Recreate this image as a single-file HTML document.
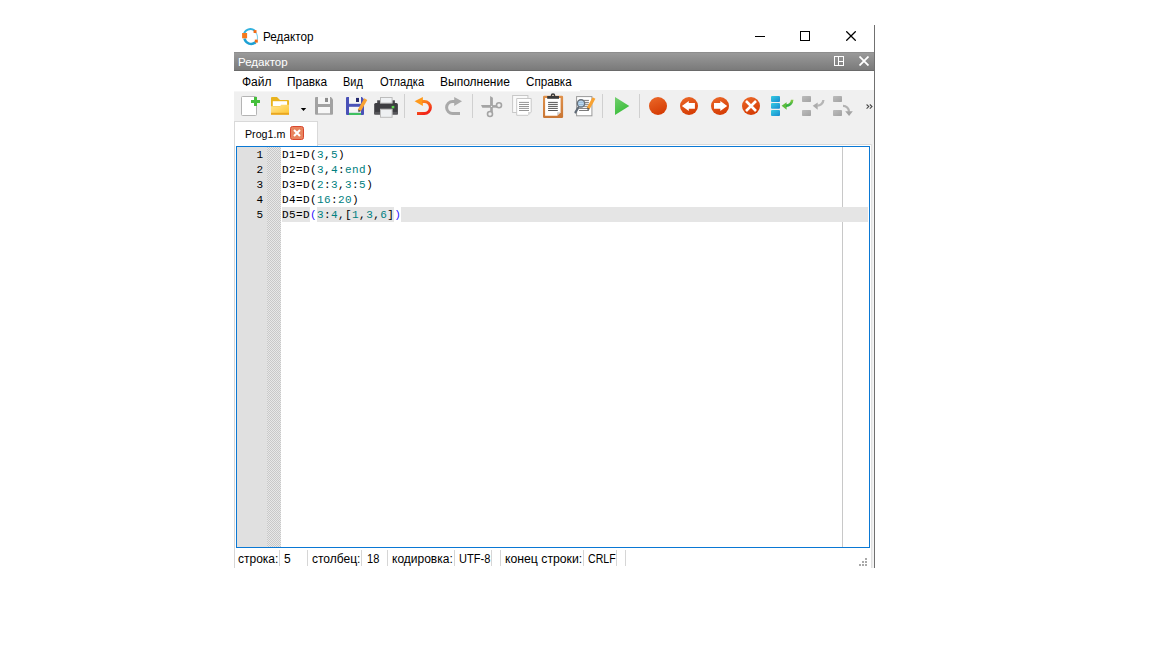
<!DOCTYPE html>
<html><head><meta charset="utf-8">
<style>
html,body{margin:0;padding:0;}
body{width:1152px;height:648px;background:#fff;position:relative;overflow:hidden;font-family:"Liberation Sans",sans-serif;font-size:12px;color:#000;}
.a{position:absolute;}
.t{position:absolute;white-space:nowrap;line-height:14px;}
.code{position:absolute;font-family:"Liberation Mono",monospace;font-size:11px;line-height:15px;white-space:pre;letter-spacing:0.4px;color:#000;}
.n{color:#008080;}
.br{color:#2a10ff;}
.sep{position:absolute;width:1px;background:#d6d6d6;}
.tsep{position:absolute;width:1px;top:94px;height:24px;background:#cfcfcf;}
.ic{position:absolute;}
</style></head><body>

<!-- window right border -->
<div class="a" style="left:874px;top:25px;width:1px;height:543px;background:#707070"></div>

<!-- title bar -->
<svg class="ic" style="left:238px;top:24px" width="24" height="24" viewBox="0 0 24 24">
  <path d="M5.6 11.5 A6.9 7.6 0 0 1 16.6 6.6" fill="none" stroke="#33b2de" stroke-width="2.1"/>
  <path d="M6.4 14.5 A6.9 7.4 0 0 0 17.5 18.2" fill="none" stroke="#1ea1d4" stroke-width="2.5"/>
  <path d="M17.6 8.4 A6.9 7.6 0 0 1 19.2 15.8" fill="none" stroke="#86d0ea" stroke-width="1.1"/>
  <rect x="4.1" y="9" width="5" height="5.3" fill="#f57a1e"/>
  <rect x="15.6" y="6.1" width="2.9" height="2.9" fill="#f26a12"/>
  <rect x="16.8" y="15.6" width="3" height="3" fill="#f26a12"/>
</svg>
<div id="t1" class="t" style="left:263px;top:30px;transform:scaleX(0.976);transform-origin:0 0">Редактор</div>
<div class="a" style="left:755px;top:36px;width:10px;height:1px;background:#000"></div>
<div class="a" style="left:800px;top:31px;width:8px;height:8px;border:1px solid #000"></div>
<svg class="ic" style="left:846px;top:31px" width="10" height="10" viewBox="0 0 10 10"><path d="M0.3 0.3L9.7 9.7M9.7 0.3L0.3 9.7" stroke="#000" stroke-width="1.25"/></svg>

<!-- panel header -->
<div class="a" style="left:234px;top:52px;width:640px;height:17px;background:linear-gradient(#9a9a9a,#7a7a7a);border-top:1px solid #8e8e8e;border-bottom:1px solid #6a6a6a"></div>
<div id="t2" class="t" style="left:238px;top:55px;font-size:11px;color:#fff;transform:scaleX(1.05);transform-origin:0 0">Редактор</div>
<svg class="ic" style="left:834px;top:56px" width="10" height="10" viewBox="0 0 10 10">
  <rect x="0.5" y="0.5" width="9" height="9" fill="none" stroke="#fff" stroke-width="1"/>
  <path d="M4.5 0.5V9.5M4.5 5.5H9.5" stroke="#fff" stroke-width="1"/>
</svg>
<svg class="ic" style="left:859px;top:56px" width="10" height="10" viewBox="0 0 10 10"><path d="M0.5 0.5L9.5 9.5M9.5 0.5L0.5 9.5" stroke="#fff" stroke-width="1.8"/></svg>

<!-- menu bar -->
<div class="a" style="left:234px;top:71px;width:640px;height:20px;background:#fff"></div>
<div id="t3" class="t" style="left:242px;top:75px;">Файл</div>
<div id="t4" class="t" style="left:287px;top:75px;transform:scaleX(0.99);transform-origin:0 0">Правка</div>
<div id="t5" class="t" style="left:343px;top:75px;transform:scaleX(0.91);transform-origin:0 0">Вид</div>
<div id="t6" class="t" style="left:380px;top:75px;transform:scaleX(0.93);transform-origin:0 0">Отладка</div>
<div id="t7" class="t" style="left:440px;top:75px;">Выполнение</div>
<div id="t8" class="t" style="left:526px;top:75px;transform:scaleX(0.97);transform-origin:0 0">Справка</div>

<!-- toolbar + tabstrip bg -->
<div class="a" style="left:234px;top:91px;width:640px;height:53px;background:#f0f0f0"></div>
<div class="a" style="left:580px;top:90px;width:294px;height:1px;background:#f0f0f0"></div>
<div class="a" style="left:234px;top:91px;width:346px;height:1px;background:#f6f6f6"></div>
<div class="a" style="left:234px;top:121px;width:1px;height:447px;background:#d6d6d6"></div>

<!-- TOOLBAR ICONS -->
<svg class="ic" style="left:0;top:0" width="1152" height="648" viewBox="0 0 1152 648">
<defs>
 <linearGradient id="gFold" x1="0" y1="0" x2="1" y2="1"><stop offset="0" stop-color="#ffe593"/><stop offset="1" stop-color="#ffc630"/></linearGradient>
 <linearGradient id="gUndo" x1="0" y1="0" x2="0.6" y2="1"><stop offset="0" stop-color="#ff9c1c"/><stop offset="1" stop-color="#f2261a"/></linearGradient>
 <linearGradient id="gRed" x1="0" y1="0" x2="0.4" y2="1"><stop offset="0" stop-color="#ec6a2a"/><stop offset="1" stop-color="#d63e06"/></linearGradient>
 <linearGradient id="gPlay" x1="0" y1="0" x2="0.5" y2="1"><stop offset="0" stop-color="#74cf70"/><stop offset="1" stop-color="#38bd38"/></linearGradient>
 <linearGradient id="gBlue" x1="0" y1="0" x2="1" y2="1"><stop offset="0" stop-color="#36cce2"/><stop offset="1" stop-color="#168ad0"/></linearGradient>
 <linearGradient id="gGray" x1="0" y1="0" x2="1" y2="1"><stop offset="0" stop-color="#bcbcbc"/><stop offset="1" stop-color="#a2a2a2"/></linearGradient>
 <linearGradient id="gGreen" x1="0" y1="0" x2="0" y2="1"><stop offset="0" stop-color="#8ccc44"/><stop offset="1" stop-color="#2eae42"/></linearGradient>
 <linearGradient id="gBoard" x1="0" y1="0" x2="0" y2="1"><stop offset="0" stop-color="#e0924c"/><stop offset="1" stop-color="#c97634"/></linearGradient>
</defs>
<!-- new -->
<rect x="241.5" y="96.5" width="15" height="19" rx="1" fill="#fff" stroke="#b4b4b4"/>
<rect x="251" y="100" width="9" height="3" fill="#45bf3c"/>
<rect x="254" y="97" width="3" height="9" fill="#45bf3c"/>
<!-- open folder -->
<path d="M271 98 Q271 97 272 97 H277 L280 100 H288 Q289 100 289 101 V110 H271 Z" fill="#e9b31e"/>
<rect x="272.8" y="101.2" width="14.3" height="4.8" fill="#fff"/>
<path d="M271 106.2 H280 L281.2 104.8 H289 V114.7 H271 Z" fill="url(#gFold)"/>
<rect x="271" y="112.8" width="18" height="1.9" fill="#e8a622"/>
<!-- dropdown -->
<path d="M300.8 108 H306.2 L303.5 111 Z" fill="#000"/>
<!-- save gray -->
<path d="M315 98 Q315 97 316 97 H331 L333 99.5 V113.7 Q333 114.7 332 114.7 H316 Q315 114.7 315 113.7 Z" fill="#a2a2a2"/>
<rect x="318" y="97" width="12" height="7" fill="#f5f5f5"/>
<rect x="325" y="97.9" width="3" height="4.1" fill="#8c8c8c"/>
<rect x="318" y="107" width="12" height="6" fill="#f7f7f7"/>
<rect x="318" y="113" width="12" height="1.7" fill="#c2c2c2"/>
<!-- save blue -->
<path d="M346 98 Q346 97 347 97 H362 L364 99.5 V114 Q364 115 363 115 H347 Q346 115 346 114 Z" fill="#4a52b8"/>
<rect x="349" y="97" width="12" height="6.8" fill="#f5f5f5"/>
<rect x="356" y="97.9" width="3" height="4.1" fill="#252a70"/>
<rect x="349" y="106.8" width="12" height="6.1" fill="#f5f5f5"/>
<rect x="349" y="112.9" width="12" height="2.1" fill="#3ec060"/>
<path d="M365.8 99.2 L359.2 110.6" stroke="#f8a232" stroke-width="3.4"/>
<path d="M358.2 109.5 L360.8 111 L358.5 112.2 Z" fill="#444"/>
<!-- printer -->
<rect x="377.2" y="100.3" width="2.8" height="3.2" fill="#48484c"/>
<rect x="392.1" y="100.3" width="2.8" height="3.2" fill="#48484c"/>
<rect x="374.2" y="103.1" width="23.7" height="11.4" rx="1.5" fill="#3d3d41"/>
<rect x="374.2" y="111.9" width="23.7" height="2.6" fill="#56565a"/>
<rect x="380.5" y="97.5" width="11.6" height="5.6" fill="#f0f2f4" stroke="#bcbcbc"/>
<rect x="380.5" y="109.2" width="11.6" height="8.1" fill="#eef0f2" stroke="#bcbcbc"/>
<rect x="391.7" y="105.9" width="2.6" height="2.4" fill="#5cd650"/>
<!-- separators -->
<rect x="404" y="94" width="1" height="24" fill="#d0d0d0"/>
<rect x="472" y="94" width="1" height="24" fill="#d0d0d0"/>
<rect x="602" y="94" width="1" height="24" fill="#d0d0d0"/>
<rect x="639" y="94" width="1" height="24" fill="#d0d0d0"/>
<!-- undo -->
<path d="M414.6 101.3 L422.9 96.9 V105.9 Z" fill="#ff9a1c"/>
<path d="M422 101.5 H424.4 A6 6 0 0 1 424.4 113.5 H417" fill="none" stroke="url(#gUndo)" stroke-width="3"/>
<!-- redo -->
<path d="M462 101.3 L454.2 96.9 V105.9 Z" fill="#ababab"/>
<path d="M455 101.5 H452.6 A6 6 0 0 0 452.6 113.5 H460" fill="none" stroke="#a9a9a9" stroke-width="3"/>
<!-- scissors -->
<path d="M490.1 96.1 L492.9 97.8 V106.5 H490.1 Z" fill="#a4a4a4"/>
<path d="M481 105 H492.5 V107.8 H482.3 Z" fill="#a4a4a4"/>
<path d="M492 106.4 H497" stroke="#a4a4a4" stroke-width="2.6"/>
<path d="M491.5 107 V112" stroke="#a4a4a4" stroke-width="2.6"/>
<circle cx="499" cy="105.2" r="2.5" fill="none" stroke="#a4a4a4" stroke-width="1.6"/>
<circle cx="490" cy="114" r="2.5" fill="none" stroke="#a4a4a4" stroke-width="1.6"/>
<circle cx="491.5" cy="106.4" r="0.7" fill="#eee"/>
<!-- copy -->
<rect x="512.6" y="95.5" width="15.3" height="17" fill="#fafafa" stroke="#c8c8c8"/>
<path d="M516.7 98.5 H531.2 V112 L528 115.3 H516.7 Z" fill="#fff" stroke="#c8c8c8"/>
<path d="M528 115.3 L531.2 112 H528 Z" fill="#d8d8d8"/>
<path d="M519 102.4 H529 M519 104.5 H529 M519 106.5 H529 M519 108.4 H529 M519 110.5 H529" stroke="#959595" stroke-width="1"/>
<!-- paste -->
<rect x="543" y="95.8" width="20.1" height="22.2" rx="1.2" fill="url(#gBoard)"/>
<path d="M545.1 97.9 H560.6 V112.2 L557.1 115.7 H545.1 Z" fill="#fff"/>
<path d="M557.1 115.7 L560.6 112.2 H557.1 Z" fill="#d0d0d0"/>
<rect x="547.2" y="96" width="11.8" height="2.8" fill="#3a3a3a"/>
<circle cx="553" cy="95.6" r="1.6" fill="none" stroke="#3a3a3a" stroke-width="1.4"/>
<path d="M548.1 102.4 H557.8 M548.1 104.4 H557.8 M548.1 106.4 H557.8 M548.1 108.4 H557.8 M548.1 110.5 H557.8" stroke="#555" stroke-width="1"/>
<!-- find/replace -->
<rect x="576.6" y="96.6" width="15.3" height="19.2" fill="#fff" stroke="#999"/>
<path d="M579.1 100.4 H588.9 M579.1 102.4 H588.9 M579.1 104.3 H588.9 M579.1 106.3 H588.9 M579.1 108.4 H588.9 M579.1 110.5 H588.9" stroke="#7a7a7a" stroke-width="1"/>
<circle cx="581" cy="103.4" r="3.6" fill="#bcdaf2" stroke="#66707a" stroke-width="1.4"/>
<path d="M578.4 102.3 H583.6 M578.4 104.5 H583.6" stroke="#8fb4d4" stroke-width="0.8"/>
<path d="M578.4 107.4 L575.4 112.4" stroke="#5f6a76" stroke-width="2.1" stroke-linecap="round"/>
<path d="M594 97.9 L588.2 108.4" stroke="#f8a232" stroke-width="3.2"/>
<path d="M587.3 107.6 L589.9 109 L587.6 110.2 Z" fill="#555"/>
<!-- play -->
<path d="M615 97 V115 L629.3 106 Z" fill="url(#gPlay)"/>
<!-- record -->
<circle cx="658" cy="106" r="9" fill="url(#gRed)"/>
<!-- back -->
<circle cx="689" cy="106" r="9" fill="url(#gRed)"/>
<path d="M681.9 106 L688.8 100.9 V103 H694.9 V108.8 H688.8 V111 Z" fill="#fff"/>
<!-- forward -->
<circle cx="720" cy="106" r="9" fill="url(#gRed)"/>
<path d="M727.2 106 L720.3 100.9 V103 H714 V108.8 H720.3 V111 Z" fill="#fff"/>
<!-- stop -->
<circle cx="751" cy="106" r="9" fill="url(#gRed)"/>
<path d="M746 101 L756 111 M756 101 L746 111" stroke="#fff" stroke-width="2.6"/>
<!-- step in (blue) -->
<rect x="771" y="96" width="9" height="6" rx="1" fill="url(#gBlue)"/>
<rect x="771" y="103" width="9" height="5.7" rx="1" fill="url(#gBlue)"/>
<rect x="771" y="110" width="9" height="6" rx="1" fill="url(#gBlue)"/>
<path d="M781.6 105.8 L786.6 102.2 V109.7 Z" fill="#5cbc3c"/>
<path d="M786 105.6 A6 6 0 0 0 792.2 99.8" fill="none" stroke="url(#gGreen)" stroke-width="2.6"/>
<!-- step (gray) -->
<rect x="802" y="96" width="9" height="6" rx="0.8" fill="url(#gGray)"/>
<rect x="802" y="110" width="9" height="6" rx="0.8" fill="url(#gGray)"/>
<path d="M812.7 105.8 L817.7 102.4 V109.7 Z" fill="#acacac"/>
<path d="M817 105.6 A6 6 0 0 0 823.4 100" fill="none" stroke="#b6b6b6" stroke-width="2.3"/>
<!-- step out (gray) -->
<rect x="833" y="96" width="9" height="6" rx="0.8" fill="url(#gGray)"/>
<rect x="833" y="110" width="9" height="6" rx="0.8" fill="url(#gGray)"/>
<path d="M843 105.8 A6 6 0 0 1 849 111.8" fill="none" stroke="#b2b2b2" stroke-width="2.3"/>
<path d="M845.2 111.2 H852.8 L849.1 116 Z" fill="#a4a4a4"/>
<!-- overflow -->
<path d="M866.6 104.5 L868.8 106.6 L866.6 108.7 M869.8 104.5 L872 106.6 L869.8 108.7" fill="none" stroke="#454545" stroke-width="1.05"/>
</svg>


<!-- tab -->
<div class="a" style="left:234px;top:121px;width:82px;height:24px;background:#fff;border:1px solid #d9d9d9;border-bottom:none"></div>
<div class="a" style="left:318px;top:144px;width:554px;height:1px;background:#dadada"></div>
<div class="a" style="left:871px;top:144px;width:3px;height:424px;background:linear-gradient(to right,#d9d9d9,#ededed 50%,#f9f9f9)"></div>
<div id="t9" class="t" style="left:245px;top:127px;font-size:11px;transform:scaleX(0.97);transform-origin:0 0">Prog1.m</div>
<svg class="ic" style="left:290px;top:126px" width="14" height="14" viewBox="0 0 14 14">
  <rect x="0.5" y="0.5" width="13" height="13" rx="2" fill="#e8845e" stroke="#d8472f"/>
  <path d="M4 4L10 10M10 4L4 10" stroke="#fff" stroke-width="2"/>
</svg>

<!-- editor -->
<div class="a" style="left:236px;top:146px;width:632px;height:400px;border:1px solid #0a78d4;background:#fff"></div>
<div class="a" style="left:237px;top:147px;width:30px;height:400px;background:#e0e0e0"></div>
<div class="a" style="left:267px;top:147px;width:14px;height:400px;background-color:#e8e8e8;background-image:linear-gradient(45deg,#c8c8c8 25%,transparent 25%,transparent 75%,#c8c8c8 75%),linear-gradient(45deg,#c8c8c8 25%,transparent 25%,transparent 75%,#c8c8c8 75%);background-size:2px 2px;background-position:1px 0,0 1px"></div>
<div class="a" style="left:842px;top:147px;width:1px;height:400px;background:#c8c8c8"></div>
<!-- current line -->
<div class="a" style="left:282px;top:207px;width:586px;height:15px;background:#e5e5e5"></div>
<div class="a" style="left:310px;top:207px;width:7px;height:15px;background:#fff"></div>
<div class="a" style="left:394px;top:207px;width:7px;height:15px;background:#fff"></div>

<div id="c1" class="code" style="left:237px;top:148px;width:26px;text-align:right;letter-spacing:0">1
2
3
4
5</div>
<div id="c2" class="code" style="left:282px;top:148px;">D1=D(<span class="n">3</span>,<span class="n">5</span>)
D2=D(<span class="n">3</span>,<span class="n">4</span>:<span class="n">end</span>)
D3=D(<span class="n">2</span>:<span class="n">3</span>,<span class="n">3</span>:<span class="n">5</span>)
D4=D(<span class="n">16</span>:<span class="n">20</span>)
D5=D<span class="br">(</span><span class="n">3</span>:<span class="n">4</span>,[<span class="n">1</span>,<span class="n">3</span>,<span class="n">6</span>]<span class="br">)</span></div>

<!-- status bar -->
<div id="t10" class="t" style="left:238px;top:552px;">строка:</div>
<div class="sep" style="left:279px;top:550px;height:16px"></div>
<div id="t11" class="t" style="left:284px;top:552px;">5</div>
<div class="sep" style="left:307px;top:550px;height:16px"></div>
<div id="t12" class="t" style="left:312px;top:552px;">столбец:</div>
<div class="sep" style="left:361px;top:550px;height:16px"></div>
<div id="t13" class="t" style="left:367px;top:552px;transform:scaleX(0.92);transform-origin:0 0">18</div>
<div class="sep" style="left:387px;top:550px;height:16px"></div>
<div id="t14" class="t" style="left:392px;top:552px;">кодировка:</div>
<div class="sep" style="left:454px;top:550px;height:16px"></div>
<div id="t15" class="t" style="left:459px;top:552px;transform:scaleX(0.92);transform-origin:0 0">UTF-8</div>
<div class="sep" style="left:491px;top:550px;height:16px"></div>
<div class="sep" style="left:500px;top:550px;height:16px"></div>
<div id="t16" class="t" style="left:505px;top:552px;transform:scaleX(1.02);transform-origin:0 0">конец строки:</div>
<div class="sep" style="left:583px;top:550px;height:16px"></div>
<div id="t17" class="t" style="left:588px;top:552px;transform:scaleX(0.88);transform-origin:0 0">CRLF</div>
<div class="sep" style="left:616px;top:550px;height:16px"></div>
<div class="sep" style="left:625px;top:550px;height:16px"></div>
<!-- grip -->
<svg class="ic" style="left:859px;top:558px" width="9" height="9" viewBox="0 0 9 9" fill="#a9a9a9">
  <rect x="6" y="0" width="2" height="2"/><rect x="3" y="3" width="2" height="2"/><rect x="6" y="3" width="2" height="2"/>
  <rect x="0" y="6" width="2" height="2"/><rect x="3" y="6" width="2" height="2"/><rect x="6" y="6" width="2" height="2"/>
</svg>

</body></html>
